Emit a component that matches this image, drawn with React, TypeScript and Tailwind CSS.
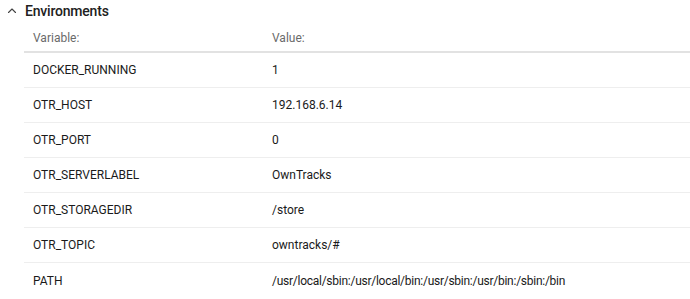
import React from "react";

const rows: [string, string][] = [
  ["DOCKER_RUNNING", "1"],
  ["OTR_HOST", "192.168.6.14"],
  ["OTR_PORT", "0"],
  ["OTR_SERVERLABEL", "OwnTracks"],
  ["OTR_STORAGEDIR", "/store"],
  ["OTR_TOPIC", "owntracks/#"],
  ["PATH", "/usr/local/sbin:/usr/local/bin:/usr/sbin:/usr/bin:/sbin:/bin"],
];

export default function App() {
  return (
    <div className="w-[690px] h-[299px] overflow-hidden bg-white text-[#212121]" style={{ fontFamily: "Roboto, 'Liberation Sans', sans-serif" }}>
      <div className="flex items-center h-[22px] pl-[6px]">
        <svg width="12" height="12" viewBox="0 0 24 24" fill="none" stroke="#424242" strokeWidth="2.2" strokeLinecap="round" strokeLinejoin="round" className="mr-[7px]">
          <path d="M5 15l7-7 7 7" />
        </svg>
        <span className="text-[14px] font-medium tracking-[-0.2px]">Environments</span>
      </div>
      <div className="ml-[24px] mt-[2px]">
        <div className="flex items-center h-[29px] border-b-2 border-[#e2e2e2] text-[12px] text-[#6a6a6a]">
          <div className="w-[248px] pl-[9px]">Variable:</div>
          <div>Value:</div>
        </div>
        {rows.map(([k, v], i) => (
          <div key={k} className={`flex items-center h-[35px] text-[12px] text-[#1a1a1a] ${i < rows.length - 1 ? "border-b border-[#eeeeee]" : ""}`}>
            <div className="w-[248px] pl-[9px]">{k}</div>
            <div className={k === "PATH" ? "tracking-[-0.26px]" : ""}>{v}</div>
          </div>
        ))}
      </div>
    </div>
  );
}
